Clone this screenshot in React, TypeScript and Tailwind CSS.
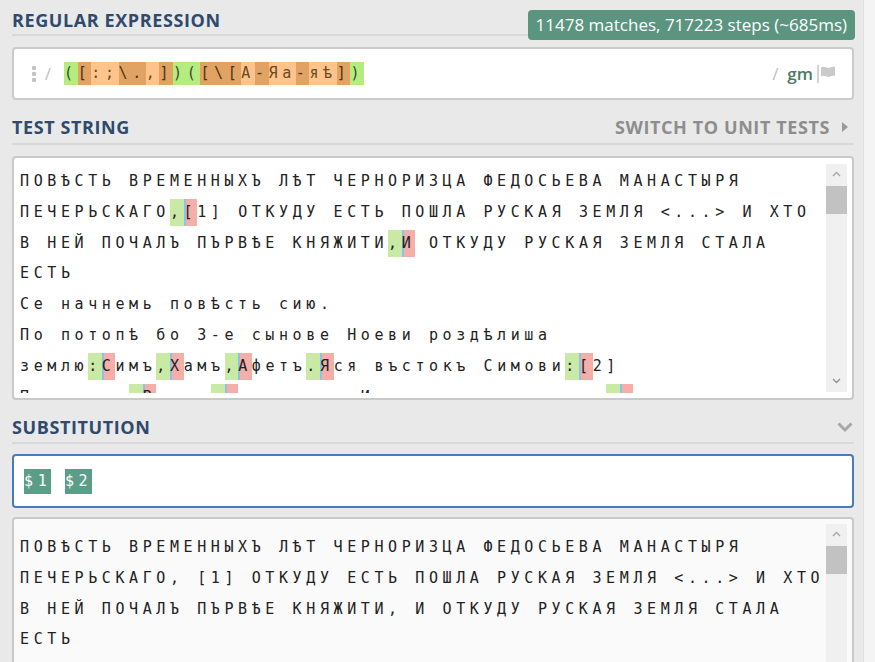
import React from 'react';

const RX = /([:;\.,])([\[А-Яа-яѣ])/g;

const testLines = [
  'ПОВѢСТЬ ВРЕМЕННЫХЪ ЛѢТ ЧЕРНОРИЗЦА ФЕДОСЬЕВА МАНАСТЫРЯ',
  'ПЕЧЕРЬСКАГО,[1] ОТКУДУ ЕСТЬ ПОШЛА РУСКАЯ ЗЕМЛЯ <...> И ХТО',
  'В НЕЙ ПОЧАЛЪ ПЪРВѢЕ КНЯЖИТИ,И ОТКУДУ РУСКАЯ ЗЕМЛЯ СТАЛА',
  'ЕСТЬ',
  'Се начнемь повѣсть сию.',
  'По потопѣ бо 3-е сынове Ноеви роздѣлиша',
  'землю:Симъ,Хамъ,Афетъ.Яся въстокъ Симови:[2]',
  'Перьсиду,Ватрь,доже и до Индикия въ долготу,и',
];

const resultLines = testLines.map((l) => l.replace(RX, '$1 $2'));

// regex tokens: g = group paren, d = class meta, l = class literal
const regexTokens: [string, 'g' | 'd' | 'l'][] = [
  ['(', 'g'], ['[', 'd'], [':', 'l'], [';', 'l'], ['\\.', 'd'], [',', 'l'], [']', 'd'], [')', 'g'],
  ['(', 'g'], ['[', 'd'], ['\\[', 'd'], ['А', 'l'], ['-', 'd'], ['Яа', 'l'], ['-', 'd'], ['яѣ', 'l'], [']', 'd'], [')', 'g'],
];

const tokenClass = {
  g: 'bg-[#b5ec80] text-[#3b4a2e]',
  d: 'bg-[#e0a364] text-[#4f3210]',
  l: 'bg-[#fec48b] text-[#6a4a22]',
};

function MatchLine({ text }: { text: string }) {
  const parts: React.ReactNode[] = [];
  let last = 0;
  for (const m of text.matchAll(RX)) {
    const i = m.index ?? 0;
    if (i > last) parts.push(text.slice(last, i));
    parts.push(
      <span key={i + 'a'} className="inline-block bg-[#c8eaa4] leading-[27px]">
        {m[1]}
      </span>
    );
    parts.push(
      <span key={i + 'b'} className="inline-block bg-[#f5aea8] leading-[27px] shadow-[inset_2px_0_0_#8cc3ea]">
        {m[2]}
      </span>
    );
    last = i + 2;
  }
  if (last < text.length) parts.push(text.slice(last));
  return <div className="whitespace-pre">{parts}</div>;
}

function FakeScrollbar() {
  return (
    <div className="w-[21px] shrink-0 bg-[#f0f0f0] flex flex-col items-center">
      <svg className="w-[9px] h-[6px] mt-[7px] mb-[9px]" viewBox="0 0 9 6">
        <path d="M1 5 L4.5 1.5 L8 5" fill="none" stroke="#a3a3a3" strokeWidth="1.3" />
      </svg>
      <div className="w-[21px] h-[28px] bg-[#c2c2c2]" />
      <div className="flex-1" />
      <svg className="w-[9px] h-[6px] mb-[8px]" viewBox="0 0 9 6">
        <path d="M1 1 L4.5 4.5 L8 1" fill="none" stroke="#8f8f8f" strokeWidth="1.3" />
      </svg>
    </div>
  );
}

const heading = "font-['Open_Sans',sans-serif] font-bold text-[18px] tracking-[0.6px] text-[#2f4a6d] uppercase";
const mono = "font-['DejaVu_Sans_Mono',monospace] text-[15px] tracking-[4.6px] text-[#222]";

export default function App() {
  return (
    <div className="flex w-[875px] h-[662px] overflow-hidden bg-[#f4f4f4]">
      <div className="w-[863px] shrink-0 bg-[#e9e9e9] pl-[12px] pr-[9px]">
        {/* regular expression */}
        <div className="relative h-[36px] pt-[6px] flex items-center border-b-2 border-[#d9d9d9]">
          <h2 className={heading}>Regular Expression</h2>
          <div className="absolute right-[-1px] top-[10px] h-[30px] px-[8px] flex items-center rounded-[4px] bg-[#5b9580] text-white text-[17px] font-['Open_Sans',sans-serif]">
            11478 matches, 717223 steps (~685ms)
          </div>
        </div>
        <div className="mt-[11px] h-[53px] rounded-[4px] border-2 border-[#cbcbcb] bg-white flex items-center pl-[18px] pr-[16px]">
          <div className="flex flex-col gap-[2px]">
            <div className="w-[4px] h-[4px] rounded-[1px] bg-[#c4c4c4]" />
            <div className="w-[4px] h-[4px] rounded-[1px] bg-[#c4c4c4]" />
            <div className="w-[4px] h-[4px] rounded-[1px] bg-[#c4c4c4]" />
          </div>
          <span className="ml-[9px] w-[19px] text-[#bdbdbd] text-[16px] font-['Open_Sans',sans-serif]">/</span>
          <div className={`${mono} whitespace-pre`}>
            {regexTokens.map(([t, k], i) => (
              <span key={i} className={`inline-block leading-[23px] ${tokenClass[k]}`}>
                {t}
              </span>
            ))}
          </div>
          <div className="flex-1" />
          <span className="text-[#bdbdbd] text-[16px] font-['Open_Sans',sans-serif]">/</span>
          <span className="ml-[9px] text-[#4c7b5e] text-[17px] font-semibold font-['Open_Sans',sans-serif]">gm</span>
          <svg className="ml-[4px] w-[19px] h-[18px]" viewBox="0 0 19 18">
            <rect x="0" y="0" width="2" height="18" fill="#d2d2d2" />
            <path d="M4 2.5 C7 0.5 10 4 13 2.5 C15 1.5 17 1.5 18 2 V11 C16 10.5 15 10.5 13 11.5 C10 13 7 9.5 4 11.5 Z" fill="#cacaca" />
          </svg>
        </div>

        {/* test string */}
        <div className="h-[45px] pt-[11px] flex items-center justify-between border-b-2 border-[#d9d9d9]">
          <h2 className={heading}>Test String</h2>
          <div className="flex items-center">
            <span className="font-['Open_Sans',sans-serif] font-bold text-[18px] tracking-[0.6px] text-[#8d8d8d] uppercase">
              Switch to unit tests
            </span>
            <svg className="ml-[12px] mr-[6px] w-[6px] h-[10px]" viewBox="0 0 6 10">
              <path d="M0 0 L6 5 L0 10 Z" fill="#9a9a9a" />
            </svg>
          </div>
        </div>
        <div className="mt-[11px] h-[244px] rounded-[4px] border-2 border-[#c9c9c9] bg-white flex overflow-hidden">
          <div className={`${mono} flex-1 h-[235px] pl-[6px] pt-[8px] leading-[30.8px] overflow-hidden`}>
            {testLines.map((l, i) => (
              <MatchLine key={i} text={l} />
            ))}
          </div>
          <div className="py-[6px] pr-[5px] flex">
            <FakeScrollbar />
          </div>
        </div>

        {/* substitution */}
        <div className="h-[44px] pt-[12px] flex items-center justify-between border-b-2 border-[#d9d9d9]">
          <h2 className={heading}>Substitution</h2>
          <svg className="mr-[1px] w-[16px] h-[11px]" viewBox="0 0 16 11">
            <path d="M1.5 1.5 L8 8 L14.5 1.5" fill="none" stroke="#a8a8a8" strokeWidth="3" />
          </svg>
        </div>
        <div className="mt-[10px] h-[54px] rounded-[4px] border-2 border-[#4a7bbb] bg-white flex items-center pl-[10px]">
          <div className={`${mono} whitespace-pre text-white`}>
            <span className="inline-block leading-[25px] bg-[#5b9e88]">$1</span>
            <span className="inline-block leading-[25px]"> </span>
            <span className="inline-block leading-[25px] bg-[#5b9e88]">$2</span>
          </div>
        </div>

        {/* result */}
        <div className="mt-[9px] h-[200px] rounded-[4px] border-2 border-[#c9c9c9] bg-[#fafafa] flex overflow-hidden">
          <div className={`${mono} flex-1 pl-[6px] pt-[13px] leading-[30.8px] overflow-hidden`}>
            {resultLines.map((l, i) => (
              <div key={i} className="whitespace-pre">
                {l}
              </div>
            ))}
          </div>
          <div className="pt-[5px] pr-[5px] flex">
            <FakeScrollbar />
          </div>
        </div>
      </div>
      <div className="flex-1 border-l border-[#e0e0e0]" />
    </div>
  );
}
